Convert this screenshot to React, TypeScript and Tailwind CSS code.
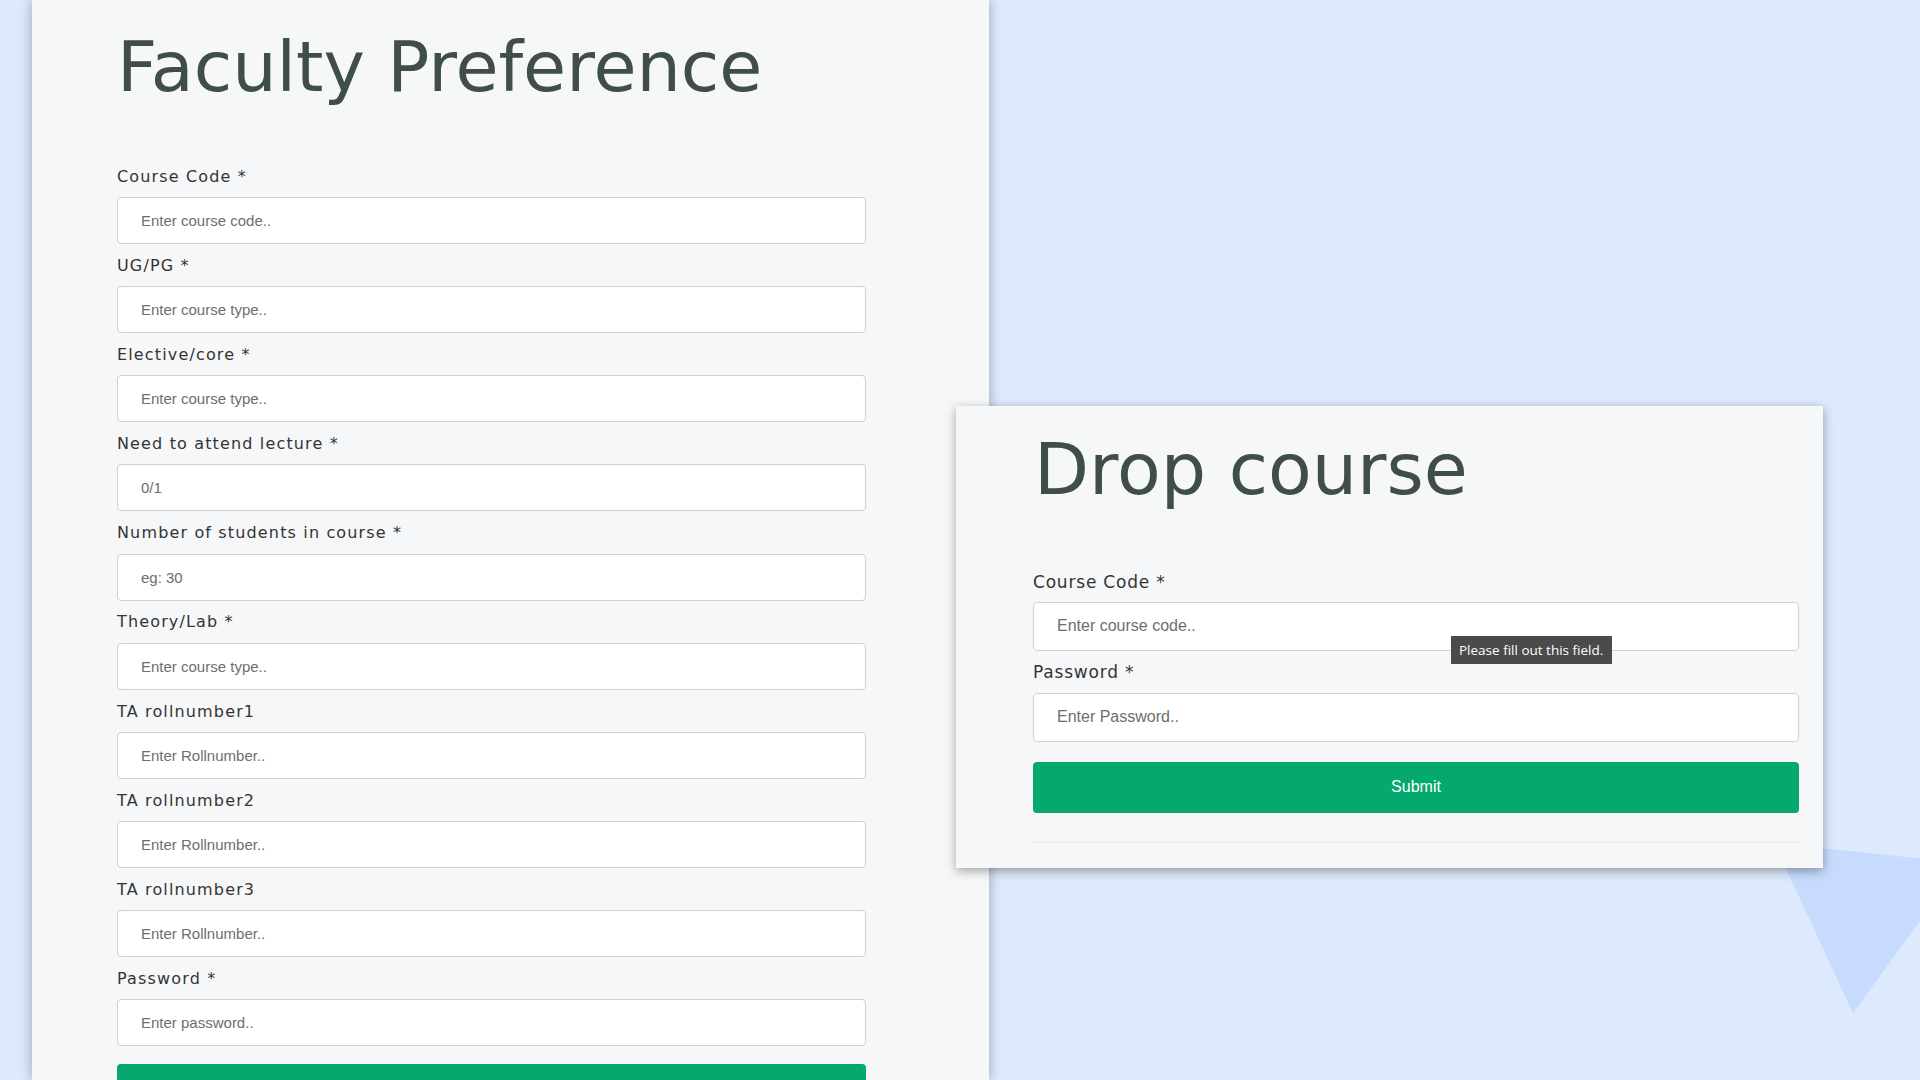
import React from "react";

const leftFields: [string, string][] = [
  ["Course Code *", "Enter course code.."],
  ["UG/PG *", "Enter course type.."],
  ["Elective/core *", "Enter course type.."],
  ["Need to attend lecture *", "0/1"],
  ["Number of students in course *", "eg: 30"],
  ["Theory/Lab *", "Enter course type.."],
  ["TA rollnumber1", "Enter Rollnumber.."],
  ["TA rollnumber2", "Enter Rollnumber.."],
  ["TA rollnumber3", "Enter Rollnumber.."],
  ["Password *", "Enter password.."],
];

export default function App() {
  return (
    <div className="relative flex items-start w-[1920px] h-[1080px] overflow-hidden bg-[#dde9fc] font-['DejaVu_Sans',sans-serif]">
      <svg className="absolute inset-0 z-0 pointer-events-none" width="1920" height="1080" viewBox="0 0 1920 1080">
        <polygon points="1774,843 1962,863 1853,1013" fill="#c6dbfd" />
      </svg>

      {/* Left panel */}
      <div className="relative z-10 ml-[32px] w-[957px] h-[1080px] shrink-0 bg-[#f6f7f9] shadow-[0_0_12px_rgba(0,0,0,0.3)] pl-[85px] pt-[32px]">
        <h1 className="ml-0 h-[70px] text-[70px] leading-[70px] text-[#3f4e49] whitespace-nowrap">
          Faculty Preference
        </h1>
        <div className="mt-[52.8px] w-[749px]">
          {leftFields.map(([label, ph], i) => (
            <div key={i}>
              <label className="block h-[42.15px] pt-[9.9px] text-[16px] leading-[24px] tracking-[1.15px] text-[#343434] whitespace-nowrap">{label}</label>
              <input
                placeholder={ph}
                className="block w-full h-[47px] border border-[#d0d0d0] rounded-[4px] bg-white px-[23px] text-[15px] font-['Liberation_Sans',Arial,sans-serif] placeholder:text-[#6e6e6e] outline-none"
              />
            </div>
          ))}
          <div className="mt-[18px] h-[48px] w-full rounded-[4px] bg-[#05a86d]" />
        </div>
      </div>

      {/* Right panel */}
      <div className="relative z-20 -ml-[33px] mt-[406px] w-[867px] h-[462px] shrink-0 bg-[#f6f7f9] shadow-[0_3px_10px_rgba(0,0,0,0.35)] pl-[77px] pr-[24px] pt-[28px]">
        <h1 className="ml-[1px] h-[71px] text-[71.5px] leading-[71px] text-[#3f4e49] whitespace-nowrap">
          Drop course
        </h1>
        <div className="mt-[64.7px]">
          <label className="block text-[17px] leading-[24px] tracking-[0.8px] text-[#343434]">Course Code *</label>
          <div className="relative mt-[8.5px]">
            <input
              placeholder="Enter course code.."
              className="block w-full h-[48.5px] border border-[#d0d0d0] rounded-[4px] bg-white px-[23px] text-[16px] font-['Liberation_Sans',Arial,sans-serif] placeholder:text-[#6e6e6e] outline-none"
            />
            <div className="absolute left-[418px] top-[34px] w-[161px] h-[28px] bg-[#4b4b4b] text-white text-[13.5px] px-[8px] flex items-center whitespace-nowrap font-['Open_Sans',sans-serif]">
              Please fill out this field.
            </div>
          </div>
          <label className="block mt-[9px] text-[17px] leading-[24px] tracking-[0.8px] text-[#343434]">Password *</label>
          <input
            placeholder="Enter Password.."
            className="block mt-[9px] w-full h-[49px] border border-[#d0d0d0] rounded-[4px] bg-white px-[23px] text-[16px] font-['Liberation_Sans',Arial,sans-serif] placeholder:text-[#6e6e6e] outline-none"
          />
          <button className="block mt-[20px] w-full h-[51px] rounded-[4px] bg-[#05a86d] text-white text-[16px] font-['Liberation_Sans',Arial,sans-serif]">
            Submit
          </button>
          <div className="mt-[29px] border-t border-[#e8eaed]" />
        </div>
      </div>
    </div>
  );
}
